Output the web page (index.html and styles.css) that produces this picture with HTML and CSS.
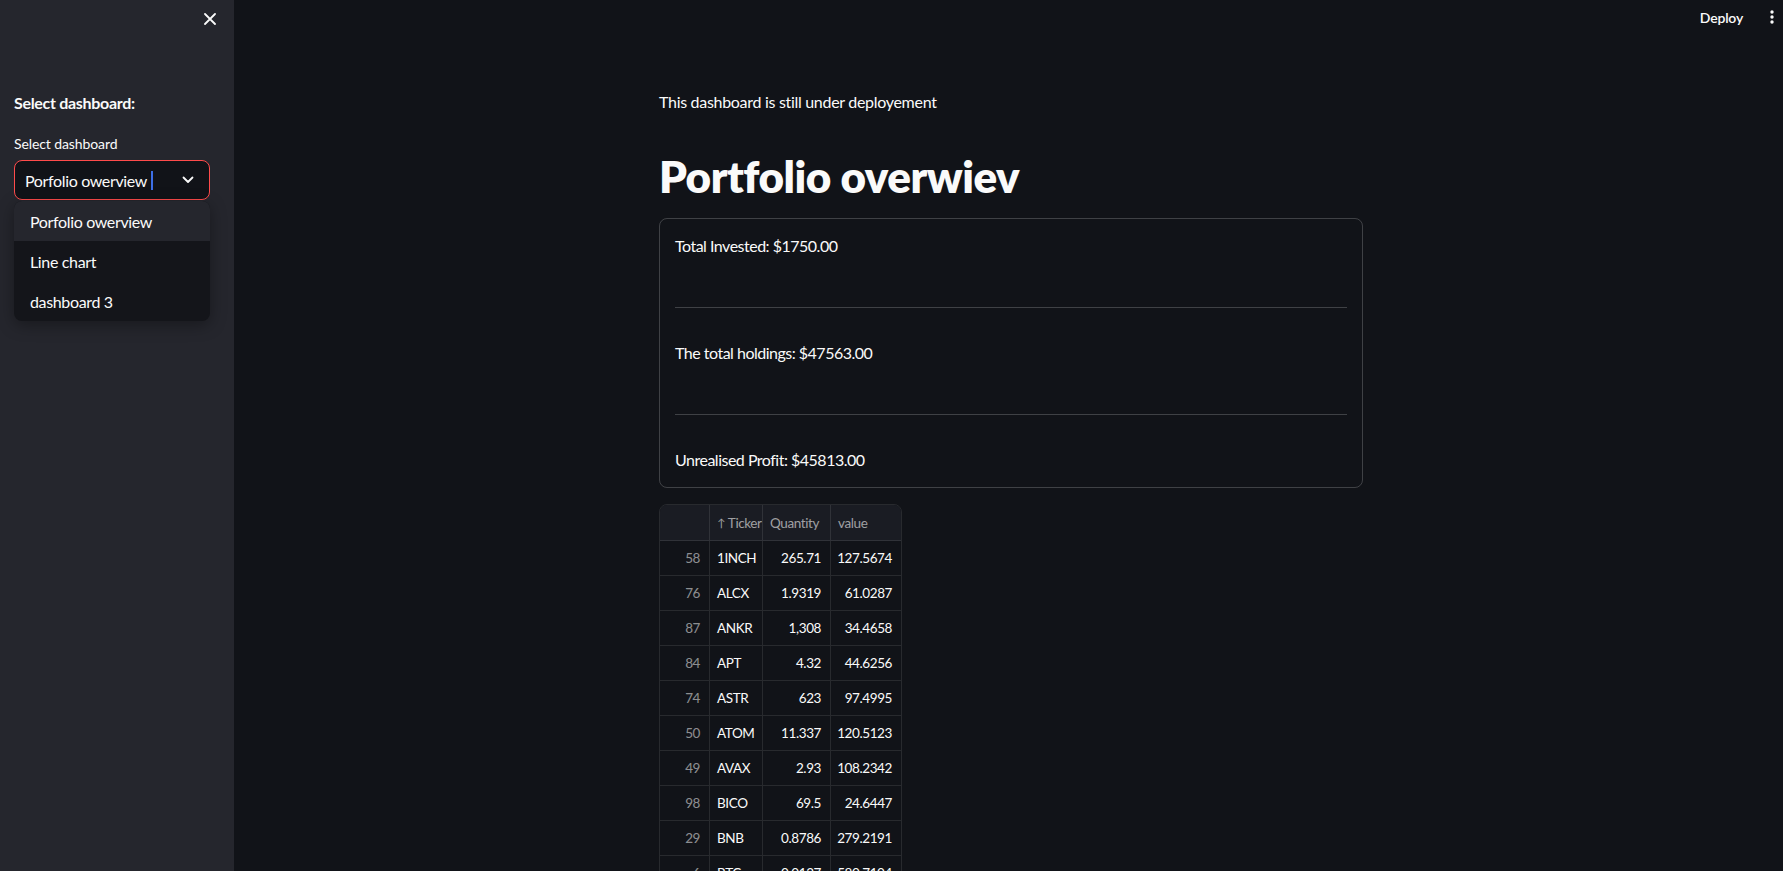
FILE: index.html
```html
<!DOCTYPE html>
<html lang="en">
<head>
<meta charset="utf-8">
<title>Portfolio overwiev</title>
<link rel="stylesheet" href="styles.css">
</head>
<body>
<div class="app">
  <aside class="sidebar">
    <div class="sidebar-top">
      <button class="close-btn" aria-label="Close sidebar">
        <svg width="12" height="12" viewBox="0 0 12 12"><path d="M1 1 L11 11 M11 1 L1 11" stroke="#fafafa" stroke-width="1.8" stroke-linecap="round"/></svg>
      </button>
    </div>
    <p class="side-heading">Select dashboard:</p>
    <label class="side-label">Select dashboard</label>
    <div class="select-wrap">
      <div class="select">
        <span class="select-value">Porfolio owerview</span><span class="caret"></span>
        <svg class="chevron" width="12" height="8" viewBox="0 0 12 8"><path d="M1.5 1.5 L6 6 L10.5 1.5" fill="none" stroke="#fafafa" stroke-width="1.8" stroke-linecap="round" stroke-linejoin="round"/></svg>
      </div>
      <ul class="menu">
        <li class="menu-item active">Porfolio owerview</li>
        <li class="menu-item">Line chart</li>
        <li class="menu-item">dashboard 3</li>
      </ul>
    </div>
  </aside>
  <main class="main">
    <header class="topbar">
      <span class="deploy">Deploy</span>
      <svg class="kebab" width="4" height="14" viewBox="0 0 4 14"><circle cx="2" cy="2" r="1.7" fill="#fafafa"/><circle cx="2" cy="7" r="1.7" fill="#fafafa"/><circle cx="2" cy="12" r="1.7" fill="#fafafa"/></svg>
    </header>
    <div class="block">
      <p class="intro">This dashboard is still under deployement</p>
      <h1 class="title">Portfolio overwiev</h1>
      <section class="card">
        <p class="stat">Total Invested: $1750.00</p>
        <hr class="divider">
        <p class="stat">The total holdings: $47563.00</p>
        <hr class="divider">
        <p class="stat">Unrealised Profit: $45813.00</p>
      </section>
      <div class="grid">
        <div class="row head">
          <div class="cell idx"></div>
          <div class="cell hd"><span class="arrow">↑</span>Ticker</div>
          <div class="cell hd">Quantity</div>
          <div class="cell hd">value</div>
        </div>
        <div class="row"><div class="cell idx">58</div><div class="cell tk">1INCH</div><div class="cell num">265.71</div><div class="cell num">127.5674</div></div>
        <div class="row"><div class="cell idx">76</div><div class="cell tk">ALCX</div><div class="cell num">1.9319</div><div class="cell num">61.0287</div></div>
        <div class="row"><div class="cell idx">87</div><div class="cell tk">ANKR</div><div class="cell num">1,308</div><div class="cell num">34.4658</div></div>
        <div class="row"><div class="cell idx">84</div><div class="cell tk">APT</div><div class="cell num">4.32</div><div class="cell num">44.6256</div></div>
        <div class="row"><div class="cell idx">74</div><div class="cell tk">ASTR</div><div class="cell num">623</div><div class="cell num">97.4995</div></div>
        <div class="row"><div class="cell idx">50</div><div class="cell tk">ATOM</div><div class="cell num">11.337</div><div class="cell num">120.5123</div></div>
        <div class="row"><div class="cell idx">49</div><div class="cell tk">AVAX</div><div class="cell num">2.93</div><div class="cell num">108.2342</div></div>
        <div class="row"><div class="cell idx">98</div><div class="cell tk">BICO</div><div class="cell num">69.5</div><div class="cell num">24.6447</div></div>
        <div class="row"><div class="cell idx">29</div><div class="cell tk">BNB</div><div class="cell num">0.8786</div><div class="cell num">279.2191</div></div>
        <div class="row"><div class="cell idx">6</div><div class="cell tk">BTC</div><div class="cell num">0.0127</div><div class="cell num">580.7104</div></div>
      </div>
    </div>
  </main>
</div>
</body>
</html>
```
FILE: styles.css
```css
* { box-sizing: border-box; }
html, body {
  margin: 0;
  padding: 0;
  height: 100%;
  overflow: hidden;
}
body {
  background: #111318;
  color: #fafafa;
  font-family: Lato, "Noto Sans", sans-serif;
}
.app {
  display: flex;
  height: 100vh;
}
.sidebar {
  width: 234px;
  flex: none;
  background: #25262d;
  padding: 0 24px 0 14px;
  display: flex;
  flex-direction: column;
}
.sidebar-top {
  height: 38px;
  flex: none;
  display: flex;
  justify-content: flex-end;
  align-items: center;
  margin-right: -6px;
}
.close-btn {
  background: none;
  border: 0;
  padding: 0;
  width: 12px;
  height: 12px;
  display: flex;
}
.side-heading {
  margin: 53px 0 0;
  font-size: 16px;
  line-height: 24px;
  font-weight: 700;
  letter-spacing: -0.3px;
}
.side-label {
  display: block;
  margin-top: 18px;
  font-size: 14px;
  line-height: 22px;
  letter-spacing: -0.1px;
}
.select-wrap {
  position: relative;
  margin-top: 5px;
}
.select {
  height: 40px;
  width: 196px;
  border: 1px solid #ff4b4b;
  border-radius: 8px;
  background: #111318;
  display: flex;
  align-items: center;
  padding-left: 10px;
  font-size: 16px;
  letter-spacing: -0.35px;
}
.caret {
  width: 2px;
  height: 19px;
  background: #3d6fe6;
  margin-left: 4px;
}
.chevron {
  margin-left: auto;
  margin-right: 15px;
}
.menu {
  position: absolute;
  top: 41px;
  left: 0;
  width: 196px;
  margin: 0;
  padding: 0;
  list-style: none;
  background: #14151a;
  border-radius: 8px;
  overflow: hidden;
  box-shadow: 0 4px 16px rgba(0,0,0,0.35);
}
.menu-item {
  height: 40px;
  display: flex;
  align-items: center;
  padding-left: 16px;
  font-size: 16px;
  letter-spacing: -0.35px;
}
.menu-item.active {
  background: #25262d;
}
.main {
  flex: 1;
  display: flex;
  flex-direction: column;
  padding-left: 5px;
  min-height: 0;
}
.topbar {
  height: 34px;
  flex: none;
  display: flex;
  justify-content: flex-end;
  align-items: center;
  padding-right: 9px;
}
.deploy {
  font-size: 14px;
  font-weight: 600;
  letter-spacing: -0.2px;
  margin-right: 27px;
}
.block {
  flex: none;
  width: 704px;
  margin: 0 auto;
  padding-top: 56px;
}
.intro {
  margin: 0;
  font-size: 16px;
  line-height: 24px;
  letter-spacing: -0.3px;
}
.title {
  margin: 36px 0 0;
  font-size: 44px;
  line-height: 53px;
  font-weight: 800;
  letter-spacing: -0.5px;
}
.card {
  margin-top: 15px;
  border: 1px solid rgba(250,250,250,0.2);
  border-radius: 8px;
  padding: 15px;
  display: flex;
  flex-direction: column;
}
.stat {
  margin: 0;
  font-size: 16px;
  line-height: 24px;
  letter-spacing: -0.5px;
}
.divider {
  margin: 49px 0 33px;
  border: 0;
  border-top: 1px solid rgba(250,250,250,0.2);
  height: 0;
}
.grid {
  margin-top: 16px;
  width: 243px;
  border: 1px solid rgba(250,250,250,0.1);
  border-radius: 8px;
  overflow: hidden;
  font-size: 13.5px;
  letter-spacing: -0.4px;
}
.row {
  display: grid;
  grid-template-columns: 50px 53px 68px 70px;
  height: 35px;
  border-bottom: 1px solid rgba(250,250,250,0.1);
}
.row.head {
  height: 36px;
  background: #1a1c23;
}
.cell {
  border-right: 1px solid rgba(250,250,250,0.1);
  display: flex;
  align-items: center;
  padding: 0 8px 0 7px;
  white-space: nowrap;
  overflow: hidden;
}
.cell:last-child { border-right: 0; }
.hd {
  color: rgba(250,250,250,0.6);
  padding-left: 7px;
  padding-right: 0;
}
.arrow {
  font-size: 11px;
  margin-right: 3px;
}
.idx {
  justify-content: flex-end;
  color: rgba(250,250,250,0.55);
  padding-right: 9px;
}
.num {
  justify-content: flex-end;
  padding-right: 9px;
}
```
